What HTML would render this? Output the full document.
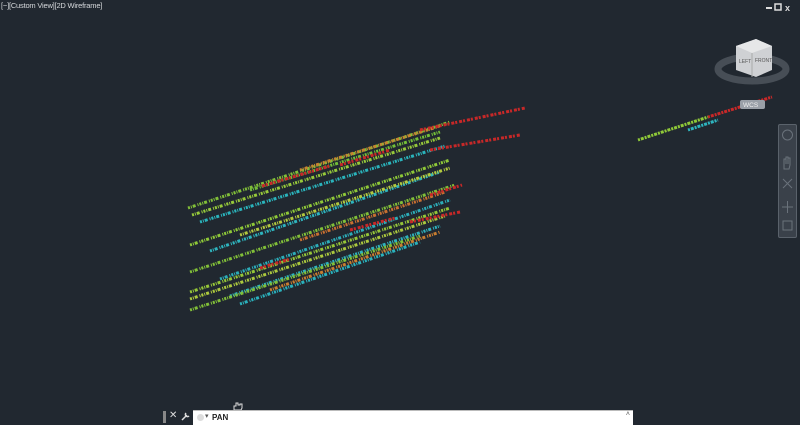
<!DOCTYPE html>
<html><head><meta charset="utf-8"><style>
html,body{margin:0;padding:0;background:#212830;width:800px;height:424px;overflow:hidden;font-family:"Liberation Sans",sans-serif}
.t{position:absolute;left:1px;top:1px;color:#d6d9dc;font-size:7.5px;letter-spacing:-0.2px}
.cmd{position:absolute;left:193px;top:410px;width:440px;height:14px;background:#fff;border-top:1px solid #bbb}
.cmd span{position:absolute;left:19px;top:2px;font-size:8px;color:#222;font-weight:bold}
.nav{position:absolute;left:778px;top:124px;width:17px;height:112px;background:#3a414a;border:1px solid #5a626b;border-radius:2px}
</style></head><body>
<div class="t">[−][Custom View][2D Wireframe]</div>
<svg width="800" height="424" style="position:absolute;left:0;top:0">
<g fill="none" stroke-linecap="butt" opacity="0.88">
<g stroke-width="3" stroke-dasharray="2 1 1 1 3 2 1 1">
<line x1="188" y1="208" x2="450" y2="122" stroke="#8fd43a"/>
<line x1="192" y1="215" x2="440" y2="138" stroke="#a8e03c"/>
<line x1="200" y1="222" x2="445" y2="146" stroke="#2cc8d0"/>
<line x1="250" y1="190" x2="440" y2="132" stroke="#7fd43a"/>
<line x1="190" y1="245" x2="450" y2="160" stroke="#9fe03a"/>
<line x1="210" y1="251" x2="440" y2="172" stroke="#30c8d2"/>
<line x1="240" y1="235" x2="450" y2="168" stroke="#c8e040"/>
<line x1="190" y1="272" x2="455" y2="185" stroke="#8fd43a"/>
<line x1="220" y1="279" x2="450" y2="200" stroke="#2ec0cc"/>
<line x1="190" y1="292" x2="450" y2="208" stroke="#a6dc3a"/>
<line x1="230" y1="296" x2="440" y2="226" stroke="#30c4d0"/>
<line x1="190" y1="299" x2="445" y2="216" stroke="#c0e040"/>
<line x1="190" y1="310" x2="420" y2="236" stroke="#8fd43a"/>
<line x1="240" y1="304" x2="420" y2="242" stroke="#2cc4d0"/>
<line x1="270" y1="290" x2="440" y2="232" stroke="#e08a30"/>
<line x1="300" y1="240" x2="445" y2="192" stroke="#e07a30"/>
<line x1="300" y1="170" x2="440" y2="126" stroke="#e09030"/>
</g>
<g stroke="#e02828" stroke-width="3" stroke-dasharray="3 1 2 2">
<line x1="420" y1="130" x2="525" y2="108"/>
<line x1="430" y1="150" x2="520" y2="135"/>
<line x1="430" y1="195" x2="462" y2="185"/>
<line x1="410" y1="222" x2="460" y2="212"/>
<line x1="262" y1="186" x2="330" y2="166"/>
<line x1="340" y1="165" x2="390" y2="150"/>
<line x1="350" y1="230" x2="395" y2="218"/>
<line x1="260" y1="268" x2="290" y2="259"/>
</g>
<g stroke-width="3" stroke-dasharray="2 1 3 1">
<line x1="638" y1="140" x2="708" y2="117" stroke="#9fe03a"/>
<line x1="688" y1="130" x2="718" y2="120" stroke="#30c8d2"/>
<line x1="708" y1="117" x2="772" y2="97" stroke="#e02828"/>
</g>
</g>
<rect x="766" y="7" width="6" height="2" fill="#ddd"/>
<rect x="775" y="4" width="6" height="6" fill="none" stroke="#ddd" stroke-width="1.5"/>
<text x="785" y="11" fill="#ddd" font-size="9" font-weight="bold" font-family="Liberation Sans">x</text>
<ellipse cx="752" cy="69" rx="34" ry="12" fill="none" stroke="#474e56" stroke-width="7"/>
<polygon points="736,46 756,39 772,46 772,70 756,77 736,70" fill="#cfd1d4"/>
<polygon points="736,46 756,39 772,46 752,53" fill="#e6e7e8"/>
<line x1="752" y1="53" x2="752" y2="77" stroke="#aaa"/>
<text x="739" y="63" font-size="5" fill="#555" font-family="Liberation Sans">LEFT</text>
<text x="755" y="62" font-size="5" fill="#555" font-family="Liberation Sans">FRONT</text>
<rect x="740" y="100" width="25" height="9" rx="2" fill="#9aa0a8"/>
<text x="743" y="107" font-size="6.5" fill="#eee" font-family="Liberation Sans">WCS</text>
<path d="M234 410 l0 -4 l2 0 l0 -3 l2 0 l0 2 l2 0 l0 -1 l2 0 l0 4 l-1 2z" fill="none" stroke="#ddd" stroke-width="1"/>
<path d="M182 420 l5 -5 M186 413 a2 2 0 1 0 3 3" stroke="#ddd" stroke-width="1.5" fill="none"/>
</svg>
<div class="nav"><svg width="17" height="112">
<circle cx="8.5" cy="10" r="5" fill="none" stroke="#6a727b"/>
<path d="M5 40 v-6 h2 v5 v-7 h2 v7 v-6 h2 v7 l-1 4 h-5z" fill="none" stroke="#6a727b"/>
<path d="M4 54 l9 9 M13 54 l-9 9" stroke="#6a727b"/>
<path d="M8.5 76 v12 M3 82 h11" stroke="#6a727b"/>
<rect x="4" y="96" width="9" height="9" fill="none" stroke="#6a727b"/>
</svg></div>
<div style="position:absolute;left:163px;top:411px;width:3px;height:12px;background:#888"></div>
<div style="position:absolute;left:169px;top:410px;color:#ddd;font-size:10px">✕</div>
<div class="cmd"><div style="position:absolute;left:4px;top:3px;width:7px;height:7px;border-radius:50%;background:#ddd"></div><div style="position:absolute;left:12px;top:1px;font-size:7px;color:#555">▾</div><span>PAN</span><div style="position:absolute;right:3px;top:0px;font-size:7px;color:#555">˄</div></div>
</body></html>
